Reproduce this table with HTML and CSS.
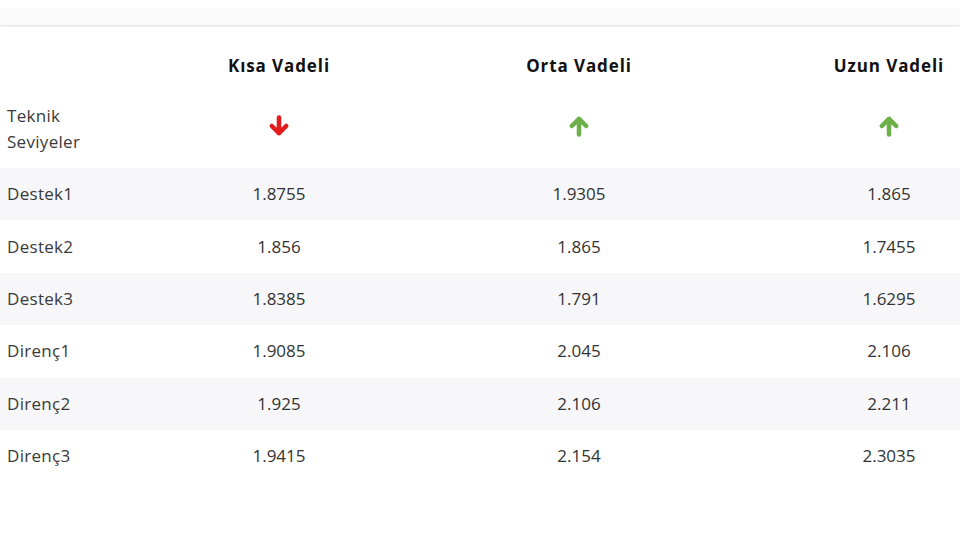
FILE: index.html
```html
<!DOCTYPE html>
<html lang="tr">
<head>
<meta charset="utf-8">
<title>Teknik Seviyeler</title>
<link rel="stylesheet" href="styles.css">
</head>
<body>
<div class="topbar"></div>
<div class="table">
  <div class="row head">
    <div class="cell label"></div>
    <div class="cell">Kısa Vadeli</div>
    <div class="cell">Orta Vadeli</div>
    <div class="cell">Uzun Vadeli</div>
  </div>
  <div class="row icons">
    <div class="cell label">Teknik<br>Seviyeler</div>
    <div class="cell"><svg class="arrow down" viewBox="0 0 20 20"><path d="M10 3v13M4 10l6 6 6-6"/></svg></div>
    <div class="cell"><svg class="arrow up" viewBox="0 0 20 20"><path d="M10 17V4M4 10l6-6 6 6"/></svg></div>
    <div class="cell"><svg class="arrow up" viewBox="0 0 20 20"><path d="M10 17V4M4 10l6-6 6 6"/></svg></div>
  </div>
  <div class="row alt">
    <div class="cell label">Destek1</div>
    <div class="cell">1.8755</div>
    <div class="cell">1.9305</div>
    <div class="cell">1.865</div>
  </div>
  <div class="row">
    <div class="cell label">Destek2</div>
    <div class="cell">1.856</div>
    <div class="cell">1.865</div>
    <div class="cell">1.7455</div>
  </div>
  <div class="row alt">
    <div class="cell label">Destek3</div>
    <div class="cell">1.8385</div>
    <div class="cell">1.791</div>
    <div class="cell">1.6295</div>
  </div>
  <div class="row">
    <div class="cell label">Direnç1</div>
    <div class="cell">1.9085</div>
    <div class="cell">2.045</div>
    <div class="cell">2.106</div>
  </div>
  <div class="row alt">
    <div class="cell label">Direnç2</div>
    <div class="cell">1.925</div>
    <div class="cell">2.106</div>
    <div class="cell">2.211</div>
  </div>
  <div class="row">
    <div class="cell label">Direnç3</div>
    <div class="cell">1.9415</div>
    <div class="cell">2.154</div>
    <div class="cell">2.3035</div>
  </div>
</div>
</body>
</html>
```

FILE: styles.css
```css
html, body {
  margin: 0;
  padding: 0;
  background: #ffffff;
  overflow: hidden;
}
body {
  width: 960px;
  height: 540px;
  font-family: "Open Sans", "Liberation Sans", sans-serif;
  color: #333333;
}
.topbar {
  margin-top: 8px;
  height: 17px;
  background: #fbfbfc;
  border-bottom: 1px solid #e6e6e8;
  box-shadow: 0 1px 2px rgba(0,0,0,0.06);
}
.table {
  width: 960px;
  overflow: hidden;
}
.row {
  display: grid;
  grid-template-columns: 125px 308px 292px 328px;
  height: 52.4px;
  align-items: center;
}
.row.alt {
  background: #f7f7f9;
}
.row.head {
  height: 74px;
  font-weight: 700;
  color: #111111;
}
.row.head .cell {
  padding-top: 6px;
  font-size: 17px;
  letter-spacing: 0.9px;
}
.row.icons {
  height: 68px;
  padding-bottom: 10px;
  box-sizing: border-box;
}
.cell {
  text-align: center;
  font-size: 17px;
  line-height: 26px;
  white-space: nowrap;
}
.cell.label {
  text-align: left;
  padding-left: 7px;
  letter-spacing: 0.3px;
  color: #3a3a3a;
}
.arrow {
  width: 24px;
  height: 24px;
  display: block;
  margin: -6px auto 0;
  fill: none;
  stroke-width: 3.8;
  stroke-linecap: round;
  stroke-linejoin: round;
}
.arrow.down {
  stroke: #e31b1b;
}
.arrow.up {
  stroke: #6db04a;
}
```
